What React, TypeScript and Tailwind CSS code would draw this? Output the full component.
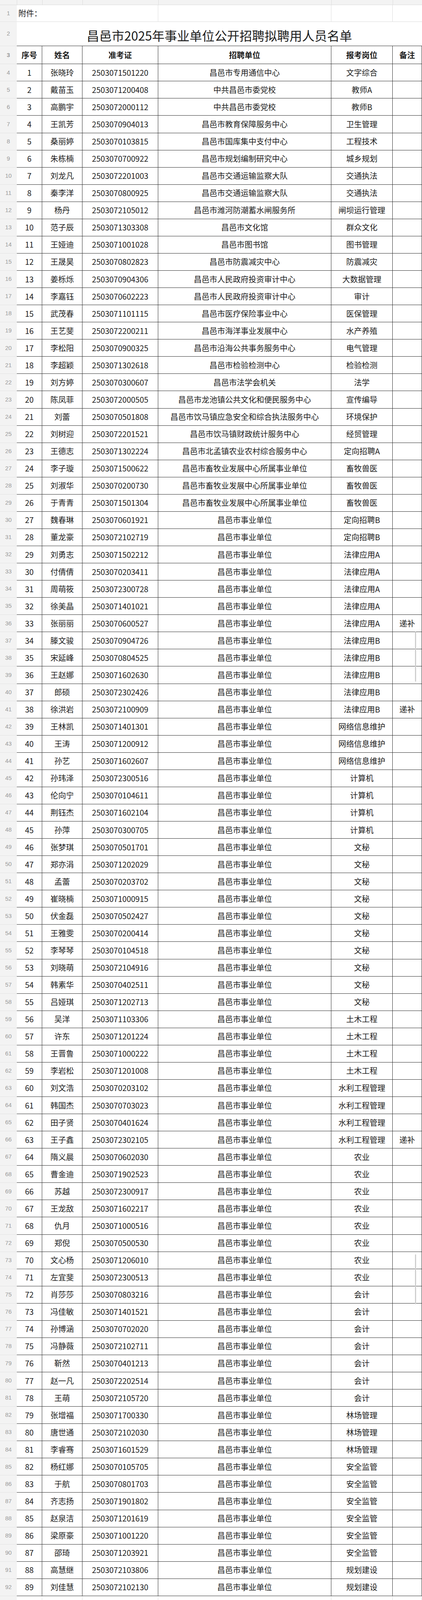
import React from 'react'

const GRID = 'grid grid-cols-[43px_65px_103px_194px_443px_157px_75px] min-h-0 basis-0'
const UNIT = '昌邑市事业单位'

// 姓名|准考证|招聘单位(空=昌邑市事业单位)|报考岗位|备注
const RAW = `张晓玲|2503071501220|昌邑市专用通信中心|文字综合
戴苗玉|2503071200408|中共昌邑市委党校|教师A
高鹏宇|2503072000112|中共昌邑市委党校|教师B
王凯芳|2503070904013|昌邑市教育保障服务中心|卫生管理
桑丽婷|2503070103815|昌邑市国库集中支付中心|工程技术
朱栋楠|2503070700922|昌邑市规划编制研究中心|城乡规划
刘龙凡|2503072201003|昌邑市交通运输监察大队|交通执法
秦李洋|2503070800925|昌邑市交通运输监察大队|交通执法
杨丹|2503072105012|昌邑市潍河防潮蓄水闸服务所|闸坝运行管理
范子辰|2503071303308|昌邑市文化馆|群众文化
王娅迪|2503071001028|昌邑市图书馆|图书管理
王晟昊|2503070802823|昌邑市防震减灾中心|防震减灾
姜栎烁|2503070904306|昌邑市人民政府投资审计中心|大数据管理
李嘉钰|2503070602223|昌邑市人民政府投资审计中心|审计
武茂春|2503071101115|昌邑市医疗保险事业中心|医保管理
王艺斐|2503072200211|昌邑市海洋事业发展中心|水产养殖
李松阳|2503070900325|昌邑市沿海公共事务服务中心|电气管理
李超颖|2503071302618|昌邑市检验检测中心|检验检测
刘方婷|2503070300607|昌邑市法学会机关|法学
陈凤菲|2503072000505|昌邑市龙池镇公共文化和便民服务中心|宣传编导
刘蕾|2503070501808|昌邑市饮马镇应急安全和综合执法服务中心|环境保护
刘树迎|2503072201521|昌邑市饮马镇财政统计服务中心|经贸管理
王德志|2503071302224|昌邑市北孟镇农业农村综合服务中心|定向招聘A
李子璇|2503071500622|昌邑市畜牧业发展中心所属事业单位|畜牧兽医
刘淑华|2503070200730|昌邑市畜牧业发展中心所属事业单位|畜牧兽医
于青青|2503071501304|昌邑市畜牧业发展中心所属事业单位|畜牧兽医
魏春琳|2503070601921||定向招聘B
董龙豪|2503072102719||定向招聘B
刘勇志|2503071502212||法律应用A
付倩倩|2503070203411||法律应用A
周萌筱|2503072300728||法律应用A
徐美晶|2503071401021||法律应用A
张丽丽|2503070600527||法律应用A|递补
滕文骏|2503070904726||法律应用B
宋延峰|2503070804525||法律应用B
王赵娜|2503071602630||法律应用B
郎硕|2503072302426||法律应用B
徐洪岩|2503072100909||法律应用B|递补
王林凯|2503071401301||网络信息维护
王涛|2503071200912||网络信息维护
孙艺|2503071602607||网络信息维护
孙玮泽|2503072300516||计算机
伦向宁|2503070104611||计算机
荆钰杰|2503071602104||计算机
孙萍|2503070300705||计算机
张梦琪|2503070501701||文秘
郑亦涓|2503071202029||文秘
孟蕾|2503070203702||文秘
崔晓楠|2503071000915||文秘
伏金磊|2503070502427||文秘
王雅雯|2503070200414||文秘
李琴琴|2503070104518||文秘
刘晓萌|2503072104916||文秘
韩素华|2503070402511||文秘
吕娅琪|2503071202713||文秘
吴洋|2503071103306||土木工程
许东|2503071201224||土木工程
王晋鲁|2503071000222||土木工程
李岩松|2503071201008||土木工程
刘文浩|2503070203102||水利工程管理
韩国杰|2503070703023||水利工程管理
田子贤|2503070401624||水利工程管理
王子鑫|2503072302105||水利工程管理|递补
隋义晨|2503070602030||农业
曹金迪|2503071902523||农业
苏越|2503072300917||农业
王龙敌|2503071602217||农业
仇月|2503071000516||农业
郑倪|2503070500530||农业
文心杨|2503071206010||农业
左宜斐|2503072300513||农业
肖莎莎|2503070803216||会计
冯佳敏|2503071401521||会计
孙博涵|2503070702020||会计
冯静薇|2503072102711||会计
靳然|2503070401213||会计
赵一凡|2503072202514||会计
王萌|2503072105720||会计
张增福|2503071700330||林场管理
唐世通|2503072102030||林场管理
李睿骞|2503071601529||林场管理
杨红娜|2503070105705||安全监管
于航|2503070801703||安全监管
齐志扬|2503071901802||安全监管
赵泉洁|2503071201619||安全监管
梁原豪|2503071001220||安全监管
邵琦|2503071203921||安全监管
高慧继|2503072103806||规划建设
刘佳慧|2503072102130||规划建设`

const rows = RAW.split('\n').map((line, i) => {
  const [name, id, unit, post, note] = line.split('|')
  return { no: i + 1, name, id, unit: unit || UNIT, post, note: note || '' }
})

function RowNum({ n }: { n: number }) {
  return (
    <div className="flex items-center justify-center bg-[#f3f3f3] border-b border-[#e4e4e4] text-[15px] text-[#9a9a9a] font-['Liberation_Sans',sans-serif]">
      {n}
    </div>
  )
}

const cell = 'flex items-center justify-center border-r border-b border-[#2e2e2e] whitespace-nowrap overflow-hidden'

// 行高按窗口高度等比分配（窗口实际高度可能被截短）
export default function App() {
  const cols = ['A', 'B', 'C', 'D', 'E', 'F']

  return (
    <div className="relative flex flex-col w-[1080px] h-screen overflow-hidden bg-white text-[#1c1c1c] font-['Noto_Sans_CJK_SC',sans-serif]">
      {/* 列标栏 */}
      <div className={`${GRID} grow-[13] bg-[#f3f3f3] border-b border-[#dcdcdc]`}>
        <div />
        {cols.map((c) => (
          <div key={c} className="border-l border-[#dcdcdc]" />
        ))}
      </div>

      {/* 第1行：附件 */}
      <div className={`${GRID} grow-[48]`}>
        <RowNum n={1} />
        <div className="col-span-3 flex items-center pl-[4px] border-r border-b border-[#dcdcdc] text-[20px]">附件：</div>
        <div className="border-r border-b border-[#dcdcdc]" />
        <div className="border-r border-b border-[#dcdcdc]" />
        <div className="border-b border-[#dcdcdc]" />
      </div>

      {/* 第2行：标题 */}
      <div className={`${GRID} grow-[69]`}>
        <RowNum n={2} />
        <div className="col-span-6 flex items-center justify-center pt-[6px] border-b border-[#2e2e2e] text-[32px] whitespace-nowrap">
          昌邑市2025年事业单位公开招聘拟聘用人员名单
        </div>
      </div>

      {/* 第3行：表头 */}
      <div className={`${GRID} grow-[51] text-[20px] font-bold`}>
        <RowNum n={3} />
        <div className={cell}>序号</div>
        <div className={cell}>姓名</div>
        <div className={cell}>准考证</div>
        <div className={cell}>招聘单位</div>
        <div className={cell}>报考岗位</div>
        <div className={cell}>备注</div>
      </div>

      {rows.map((r) => (
        <div key={r.no} className={`${GRID} grow-[48.85] text-[20px]`}>
          <RowNum n={r.no + 3} />
          <div className={cell}>{r.no}</div>
          <div className={cell}>{r.name}</div>
          <div className={cell}>{r.id}</div>
          <div className={cell}>{r.unit}</div>
          <div className={cell}>{r.post}</div>
          <div className={cell}>{r.note}</div>
        </div>
      ))}

      {/* 第93行（只露出顶部） */}
      <div className={`${GRID} grow-[11]`}>
        <div className="bg-[#f3f3f3]" />
        {cols.map((c) => (
          <div key={c} className="border-r border-[#dcdcdc]" />
        ))}
      </div>

      {/* 滚动条痕迹 */}
      <div className="absolute left-[1062px] top-[39.48%] h-[3.13%] w-[3px] rounded-full bg-[#cfcfcf]" />
      <div className="absolute left-[1062px] top-[78.4%] h-[3.13%] w-[3px] rounded-full bg-[#cfcfcf]" />
    </div>
  )
}
